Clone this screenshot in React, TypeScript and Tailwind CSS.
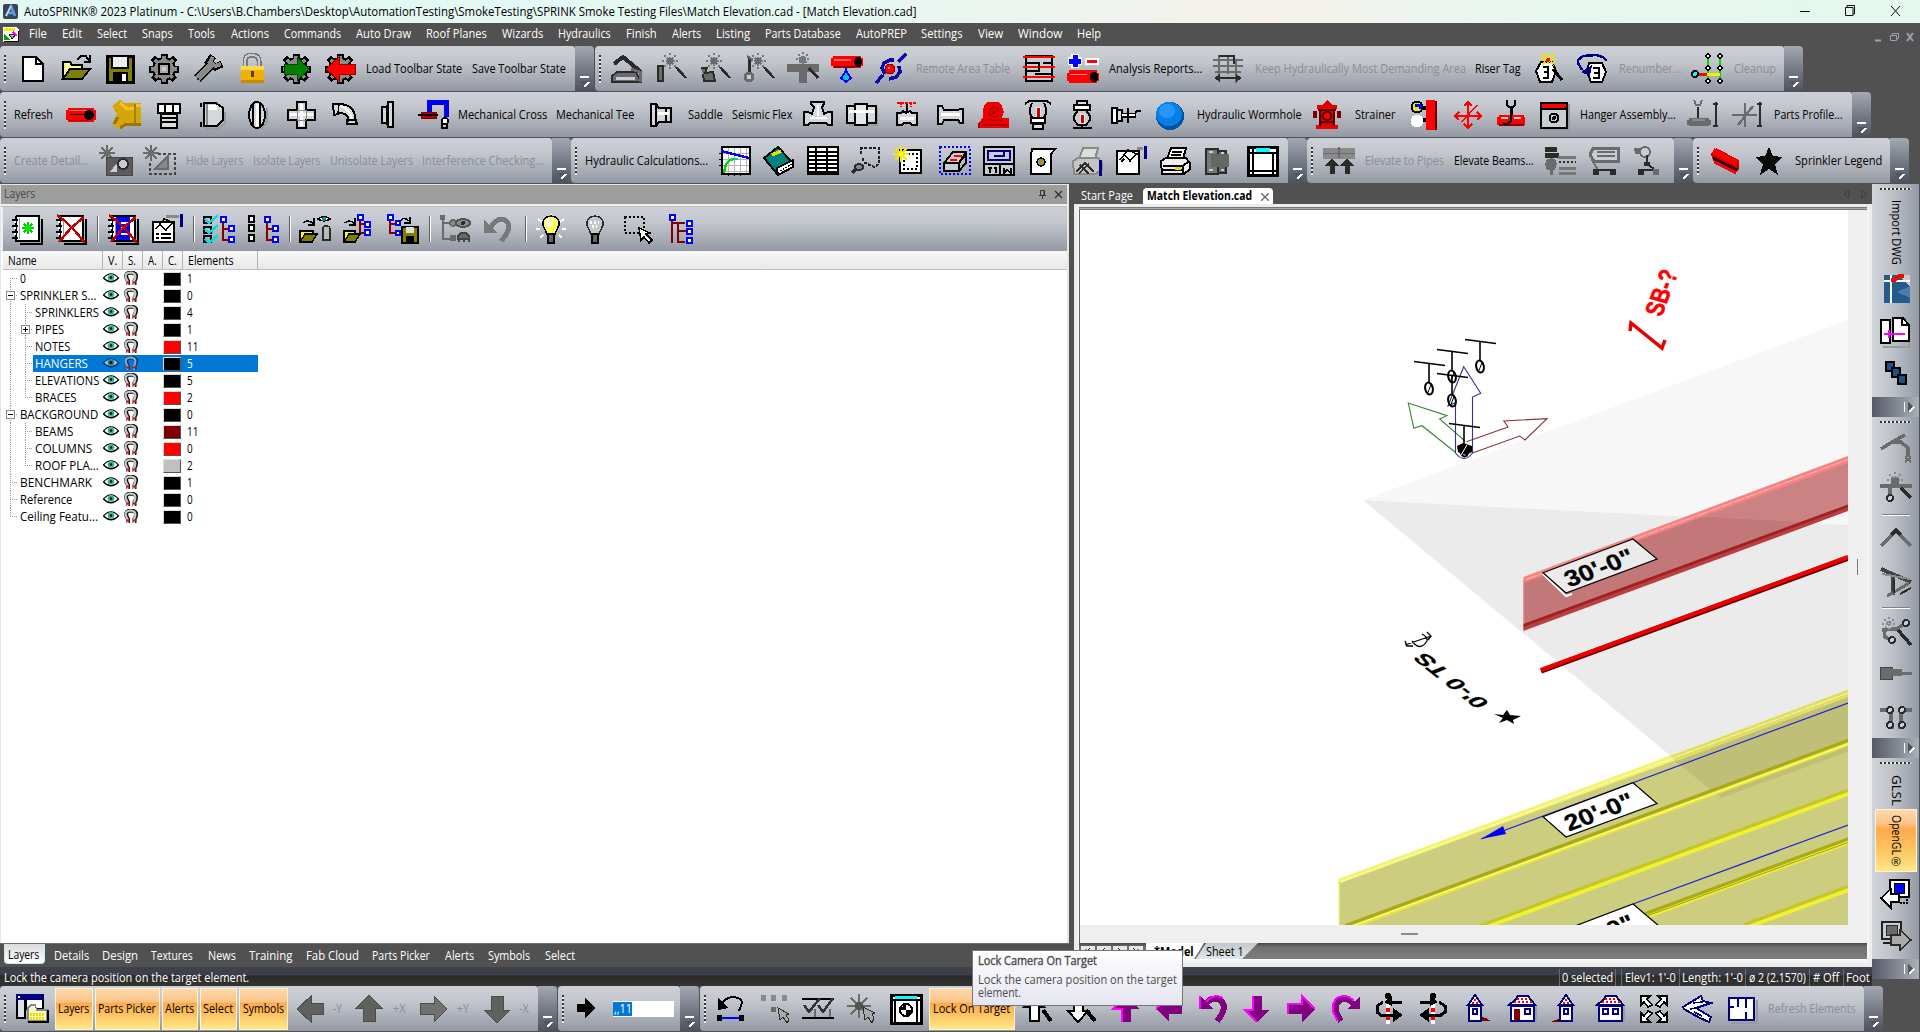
import { useLayoutEffect, useRef, type ReactNode } from "react";

/* ---------- text fitted to a given length ---------- */
function Fit({ w, children, className = "" }: { w: number; children: string; className?: string }) {
  const ref = useRef<HTMLSpanElement>(null);
  useLayoutEffect(() => {
    const el = ref.current;
    if (!el) return;
    const natural = el.offsetWidth;
    if (natural > 0) el.style.transform = `scaleX(${w / natural})`;
  }, [w, children]);
  return (
    <span className="block whitespace-nowrap" style={{ width: w }}>
      <span ref={ref} className={"inline-block origin-left whitespace-pre " + className}>{children}</span>
    </span>
  );
}
function VFit({ h, children }: { h: number; children: string }) {
  const ref = useRef<HTMLSpanElement>(null);
  useLayoutEffect(() => {
    const el = ref.current;
    if (!el) return;
    const natural = el.offsetHeight;
    if (natural > 0) el.style.transform = `scaleY(${h / natural})`;
  }, [h, children]);
  return (
    <div className="w-4" style={{ height: h }}>
      <span ref={ref} className="block h-max w-4 origin-top whitespace-pre text-[12px] leading-4 [writing-mode:vertical-rl]">{children}</span>
    </div>
  );
}

/* ---------- icon drawings, 32 x 30 grid: path, fill, stroke, width, dashes ---------- */
type Shape = [string, string, string?, number?, string?];
const k = "#000", w = "#fff", g = "#6b6b6b", r = "#f00", n = "#000080", d = "#2b2b2b", m = "#800000", y = "#ff0", b = "#00f", q = "#8a8a8a", L = "#c9ccd1";
const c = (x: number, v: number, a: number, e = a) => `M${x - a} ${v}a${a} ${e} 0 1 0 ${2 * a} 0a${a} ${e} 0 1 0 ${-2 * a} 0Z`;
const R = (x: number, v: number, a: number, e: number) => `M${x} ${v}h${a}v${e}h${-a}Z`;
const F = "none";
const gear: Shape[] = [
  ["M16 0V30M1 15H31M5 4L27 26M27 4L5 26", F, k, 7],
  [c(16, 15, 11), q, k, 2],
  ["M16 2V28M3 15H29M7 6L25 24M25 6L7 24", F, q, 4],
];
const spark = (x: number, v: number, s: number, col: string): Shape => [`M${x - s} ${v}H${x + s}M${x} ${v - s}V${v + s}M${x - s * 0.7} ${v - s * 0.7}L${x + s * 0.7} ${v + s * 0.7}M${x + s * 0.7} ${v - s * 0.7}L${x - s * 0.7} ${v + s * 0.7}`, F, col, 1.5];
const wand: Shape[] = [[spark(15, 7, 8, "#777")[0], F, "#777", 2, "2 1.5"], [R(12, 4, 6, 6), g], ["M21 13L31 24", F, d, 2.5]];
const notebook: Shape[] = [["M9 30H31V5", F, k, 2], ["M6 2H28V27H5V3Z", w, k, 2.5], ["M8 4V25", F, "#999", 1], ["M1 6H7M1 12H7M1 18H7M1 24H7", F, k, 2.5], ["M3 8H5M3 14H5M3 20H5", F, w, 2]];
const redX: Shape = ["M2 1L10 7L20 17L30 29M29 3L16 14L4 28", F, "#c00000", 2.5];
const tree: Shape[] = [["M20 6V26H27M20 15H27", F, m, 2], [R(18, 3, 5, 5), w, b, 2], [R(26, 12, 5, 5), w, b, 2], [R(26, 23, 5, 5), w, b, 2]];
const house = (wide: boolean): Shape[] => wide
  ? [["M29 28V13", F, "#9a9da2", 3], ["M9 6L12 2H22L29 11H3Z", "#fff", n, 2], ["M8 8H26M11 5H23", F, r, 2.5, "2 2"], [R(5, 12, 23, 15), w, n, 2], [R(19, 15, 5, 5), w, n, 2]]
  : [["M13 1L20 11H6Z", "#fff", n, 2], ["M10 9H17M12 6H15", F, r, 2.5, "2 2"], [R(7, 12, 12, 15), w, n, 2], [R(11, 15, 4, 5), w, n, 2]];

const ICONS: Record<string, Shape[]> = {
  page: [["M7 3H20L27 10V27H7Z", w, k, 2], ["M20 3V10H27", F, k, 2]],
  open: [["M17 6L21 2H26L29 7M30 1V8H24", F, k, 2], ["M3 25V8H10L12 11H22V16", "#ffff9a", k, 2], ["M3 25L10 15H30L22 25Z", "#808000", k, 2]],
  save: [["M3 2H29V28H3Z", "#808000", k, 3], [R(8, 2, 16, 12), "#eee", k, 2], [R(9, 18, 15, 10), k], [R(18, 20, 4, 7), w]],
  gear: [...gear, [R(11, 10, 10, 10), "#a8a8a8", k, 2], [R(14, 13, 4, 4), L]],
  wrench: [["M5 25L21 9", F, k, 9], ["M21 2L17 8L23 13L30 10", F, k, 7], ["M5 25L21 9", F, q, 6], ["M21 3L18 8L23 12L29 10", F, q, 4], [c(6, 25, 1.5), d]],
  lock: [["M9 13V7Q9 1 16 1Q23 1 23 7V13", F, "#777", 5], ["M9 13V7Q9 1 16 1Q23 1 23 7V13", F, "#ccc", 2], [R(5, 12, 23, 17), "#f2b100"], [R(5, 12, 23, 4), "#fcd94a"], [R(5, 26, 23, 3), "#c98a00"], ["M16 17V23", F, "#5a3c00", 3]],
  gearGo: [...gear, ["M4 10H17V3L29 15L17 27V20H4Z", "#008000", "#004000", 1]],
  gearBack: [...gear, ["M31 10H15V3L2 15L15 27V20H31Z", r, "#900", 1]],
  deskA: [["M3 10L12 3L30 18", F, d, 4], ["M1 28V22L6 18H25L30 28Z", g, d, 2], ["M5 24H24", F, L, 3], ["M20 15L29 18V28", F, g, 3]],
  wandA: [...wand, [R(3, 12, 5, 15), g, d, 2]],
  wandB: [...wand, ["M2 14H8L6 19L14 18L16 27H5L4 20", g, d, 2]],
  wandC: [...wand, ["M6 3V19", F, d, 3], [c(6, 23, 4), L, g, 3], ["M4 2L10 6", F, g, 2]],
  wandD: [[R(0, 10, 32, 8), g], [R(12, 10, 8, 19), g], [R(12, 3, 7, 6), "#777"], [spark(16, 5, 7, "#777")[0], F, "#777", 2, "2 1.5"], ["M22 14L31 24", F, d, 3]],
  pipeDrop: [[R(2, 2, 28, 12), r], [R(0, 4, 32, 8), r], ["M3 12.500H24", F, "#900", 2], ["M3 6H20", F, "#ff7070", 1.5], [c(27, 8, 4, 5), k], ["M15 14V20", F, b, 2], ["M15 17L20 24L15 28L10 24Z", "#0cc", b, 2]],
  orbit: [["M1 29L8 21M10 20L7 14L9 9L15 6H19M23 8L31 0M24 12L25 18L21 23L14 25", F, "#0a0aa8", 3.5], [c(15, 15, 5), r, m, 1], [c(14, 14, 1.5), "#f99"]],
  sheetRed: [[R(3, 2, 26, 25), L, k, 2], ["M0 3H32M0 13H32M0 23H32", F, r, 2], ["M4 9H16V17H4M29 9H20M12 20H29", F, k, 2]],
  plusPipe: [["M8 0V14M1 7H15", F, w, 8], ["M8 1V13M2 7H14", F, b, 5], [R(19, 5, 12, 5), r, w, 2], [R(2, 16, 28, 13), r], [R(0, 19, 32, 8), r], [c(27, 23, 4.5, 5.5), k], ["M3 20H20", F, "#ff9090", 1]],
  grate: [["M1 6H31M1 12H31M3 18H29M3 24H29", F, g, 2], ["M7 1V24M24 7V29M16 3V20", F, g, 2.5], ["M7 2H22V10", F, d, 2], ["M3 24H29", F, d, 2], ["M2 24L8 20V28ZM30 24L24 20V28Z", d]],
  tag3: [["M9 8H20L24 17L20 28H8L4 17Z", w, k, 2], ["M11 13H16V24H11M12 18H16", F, k, 2.5], ["M21 15L30 26", F, k, 3], ["M16 -1V12M8 5H24M10 0L22 11M22 0L10 11", F, "#f4e400", 2, "3 1"], [c(16, 6, 2), r]],
  tag3b: [["M13 9H26L30 18L26 28H15L11 18Z", w, k, 2], ["M17 14H23V24H17M18 19H22", F, k, 2.5], ["M2 11V6L7 2L20 1L27 3L31 7M2 9L6 16", F, n, 2.5], ["M5 18L16 11L14 22Z", n]],
  nodes: [["M16 4V26M28 4V26", F, "#0d0", 2.5], ["M4 20H15", F, r, 3], ["M15 20H28", F, "#f0f000", 3], [c(3, 20, 3), "#0ff", k, 2], [c(16, 2, 2), w, k, 1.5], [c(28, 2, 2), w, k, 1.5], [c(16, 14, 2), w, k, 1.5], [c(28, 14, 2), w, k, 1.5], [c(16, 27, 2), w, k, 1.5], [c(28, 27, 2), w, k, 1.5]],

  pipe: [[R(2, 8, 26, 14), r], [R(0, 10, 30, 10), r], ["M4 14.500H20", F, k, 1.5], ["M3 20.500H22", F, "#a00000", 1.5], ["M3 10.500H22", F, "#ff6a6a", 1.5], [c(23, 15, 5, 5), k]],
  fittingY: [["M31 3H15L10 0L2 6L7 14L2 24L9 29L16 25H31Z", "#d4a60e"], ["M31 5H25M24 8H16L10 3", F, "#f0c428", 3], ["M25 4V25", F, "#a88000", 1.5], ["M31 24H16L10 28M8 17L4 24", F, "#9c7600", 3]],
  bolt: [[R(4, 4, 22, 9), w, k, 2.5], ["M11 4V13M19 4V13", F, k, 2], [R(7, 14, 16, 14), "#ddd", k, 2.5], ["M7 18H23M7 22H23", F, k, 2]],
  cap: [["M27 12V23L21 29H8", F, "#989ba0", 2], ["M6 3H18L25 8V20L19 26H6Z", "#d5d7da", k, 2], [R(10, 5, 9, 5), w], ["M9 4V25", F, q, 1.5], ["M3 3V7M3 22V27", F, k, 2]],
  disc: [["M25 8V22L19 29", F, "#989ba0", 2], [c(15, 15, 8, 13), "#d5d7da", k, 2], ["M11 4V26M18 3V27", F, k, 1.5], ["M15 4V26", F, w, 3]],
  cross: [["M11 2H20V10H29V20H20V28H11V20H2V10H11Z", "#d5d7da", k, 2], ["M15 4V26M4 14H27", F, w, 3], ["M11 10V20M20 10V20M11 10H20M11 20H20", F, q, 1]],
  elbow: [["M3 4H11Q25 6 25 18L27 24H17L18 19Q18 14 11 13L4 15Z", "#d5d7da", k, 2], ["M8 6Q20 7 22 20", F, w, 2], ["M9 4L8 13M16 20H25", F, k, 1.5]],
  plate: [[R(14, 2, 5, 25), "#d5d7da", k, 2], [R(8, 7, 5, 16), "#d5d7da", k, 2], ["M13 5V25", F, k, 2]],
  riserNip: [["M11 15V2H28V17", F, "#001090", 5], ["M11 15V2H28V17", F, b, 3.5], [R(3, 12, 15, 6), "#b00000", m, 1], ["M0 15H20", F, k, 1.5], [c(27, 21, 3), w, k, 1.5], [R(24, 24, 5, 4), L, k, 2]],
  reducer: [["M7 4H12L15 8H27V22H15L12 26H7Z", "#d5d7da", k, 2], ["M12 4V26M22 8V22", F, k, 1.5], ["M14 13H25", F, w, 3]],
  tee: [["M2 25V12H6L10 14L12 7L9 4V2H22V4L20 7L22 14L26 12H30V25H26L24 23H8L6 25Z", "#d5d7da", k, 2], ["M8 18H25M16 5V16", F, w, 2.5]],
  coupling: [["M3 25H31V8", F, "#989ba0", 2], [R(1, 6, 29, 17), "#d5d7da", k, 2], [R(9, 4, 12, 21), "#e5e6e8", k, 2], ["M3 11H28", F, w, 3]],
  drain: [["M7 3H26M11 2V7M21 2V7", F, r, 2, "3 1"], ["M16.500 4V12", F, k, 2], ["M7 13H11L13 11L16 13L20 11L22 13H27V25H22L20 23H14L12 25H7Z", "#d5d7da", k, 2], ["M10 18H24", F, w, 3]],
  nipple: [["M4 6H8L10 10H24L26 9H29V23H26L24 20H10L8 24H4Z", "#d5d7da", k, 2], ["M7 14H26", F, w, 3]],
  pump: [["M9 2H20L24 6L26 12L24 18H31V28H1V23L5 17Q4 6 9 2Z", "#ee0000"], [c(16, 12, 5), F, "#b00000", 1.5], [c(16, 12, 2), "#b80000"], ["M4 25H29M7 20H25M1 28V23", F, "#b00000", 1.5]],
  pendentU: [["M3 4L7 1H25L29 4", F, k, 2], ["M10 3L8 8V14L12 20H20L24 14V8L22 3", "#c9cbce", k, 2], [R(14, 7, 4, 10), "#d00000", "#eee", 1], [R(9, 18, 14, 5), w, k, 2], [R(11, 24, 10, 5), "#ddd", k, 2]],
  pendentD: [["M7 28H26M16 24V28", F, k, 2.5], ["M12 10L8 16V20L12 25H20L24 20V16L20 10", "#c9cbce", k, 2], [R(14, 14, 4, 9), "#d00000", "#eee", 1], [R(8, 5, 16, 5), w, k, 2], [R(11, 1, 10, 4), "#ddd", k, 2]],
  sidewall: [[R(2, 8, 5, 15), w, k, 2], [R(7, 10, 5, 11), "#ddd", k, 2], ["M12 15H26", F, k, 5], ["M12 15H25", F, w, 2], ["M18 8V23M25 13L27 11H31", F, k, 2]],
  ball: [[c(16, 16, 14, 14), "#0054a8"], [c(15, 14, 13, 12), "#0a7ee4"], [c(13, 11, 8, 7), "#2496fc"]],
  hydrant: [["M9 7L16 0L23 7V27H9Z", "#d80000"], ["M6 7H26M5 27H27", F, "#e80000", 4], ["M4 11V18M28 11V18", F, "#700", 4], [c(16, 16, 4), r, "#500", 2], ["M9 9V26M23 9V26M10 22H22M7 10H25", F, "#500", 1.5]],
  bell: [["M14 8H20M14 20H20", F, k, 4], [R(18, 0, 9, 30), r], ["M28 1V30", F, "#600", 2], [c(9, 7, 5.5), "#f0e800", k, 2], ["M7 5H12V9", F, b, 3], [c(9, 21, 6.5), w]],
  seismic: [["M16 3V27M3 16H29M10 22L25 5", F, r, 1.5], ["M12 6L16 2L20 6M25 12L29 16L25 20M7 12L3 16L7 20M12 24L16 28L20 24", F, r, 1.5]],
  hangerRed: [["M15 7V17", F, k, 3], ["M11 0V5L13 7H17L19 5V0", F, k, 2], [R(3, 15, 25, 11), r], [R(1, 17, 28, 8), r], ["M3 25H28", F, "#800", 2], ["M15 15V21L11 24H7", F, k, 2.5], ["M5 18H12M18 18H25", F, "#fcc", 2]],
  panel: [["M31 4V30H5", F, "#989ba0", 2], [R(3, 3, 26, 25), L, k, 2.5], [R(4, 4, 24, 5), r], ["M3 9H29", F, k, 2], [c(16, 18, 4.5), F, k, 2], [c(16, 18, 2), k]],
  hangGrayA: [["M11 7V18", F, d, 2], ["M7 0L9 5H13L15 0", F, g, 2], [R(2, 18, 20, 8), g], [R(0, 20, 24, 5), g], ["M5 20H18", F, q, 2], ["M29 2V27M26 4H31M26 26H31", F, d, 2]],
  hangGrayB: [["M14 3V27M1 15H26M7 25L22 6", F, g, 2.5], ["M29 2V27M26 4H31M26 26H31", F, d, 2]],

  cube: [spark(7, 7, 8, g), ["M6 11H32V29H6Z", "#5c5c5c", "#444", 1], [c(23, 18, 5), L, d, 2], ["M10 26L17 17V26Z", L]],
  cubeSel: [spark(7, 7, 8, g), ["M14 8H31V28H6V16", F, "#444", 2.5, "3 2"], ["M11 23L24 10V23Z", q, g, 2]],
  graph: [[R(3, 1, 28, 27), "#ddd", k, 2], [R(4, 2, 26, 25), w], ["M9 2V27M15 2V27M21 2V27M27 2V27M4 7H30M4 13H30M4 19H30M4 25H30", F, "#b5b5b5", 1], ["M2 5L30 12", F, b, 2.5], ["M5 27L7 18L11 14L15 13", F, "#0d0", 2.5], ["M15 13H19", F, "#0cc", 2.5], ["M0 7H3M0 13H3M0 19H3M9 30V27M15 30V27M21 30V27", F, k, 1]],
  book: [["M1 12L15 1L29 16L15 29Z", "#008080", k, 2], ["M15 29L14 22L30 14V21Z", w, k, 2], ["M17 25L29 18", F, k, 1, "2 1"], ["M9 9L18 5", F, "#e8e000", 3.5]],
  grid: [[R(1, 1, 30, 27), w, k, 2], ["M1 6H31M1 10H31M1 14H31M1 18H31M1 22H31M1 26H31M9 1V28M20 1V28", F, k, 1.5]],
  loupe: [["M10 8V2H28V18L23 21L12 16V11", F, "#222", 2, "3 1.5"], [c(8, 21, 4, 3), "#888", d, 2], ["M1 27L5 23", F, d, 3]],
  newSel: [[R(5, 4, 21, 23), w, k, 2], ["M9 8H22V23H9Z", F, k, 1.5, "2 2"], [spark(6, 8, 8, y)[0], F, "#f4e800", 2], [c(6, 8, 2), y]],
  stamp: [["M1 1H31V28H1Z", F, b, 2, "2 2"], ["M5 17L14 6H27L20 17V25H5Z", L, k, 2], ["M5 17H20L27 8V17L20 25", F, k, 2], ["M11 14H18M15 10H23", F, r, 2.5]],
  calc: [[R(1, 1, 30, 28), L, k, 2], [R(5, 5, 22, 9), L, n, 2.5], ["M11 10H21V6", F, n, 1.5], ["M1 18H31M17 18V29M5 22H9M11 22H14M7 22V27M13 22V27M21 22V27L24 24L28 27V22", F, k, 1.5]],
  scroll: [["M5 3H28L24 8V28H4V9Z", w, k, 2], [c(14, 16, 4), "#0cc", k, 1.5], ["M14 13V19M11 16H17", F, "#d88000", 1.5]],
  printSetup: [["M8 13L12 2H27L24 13Z", "#ddd", q, 2], ["M2 15L7 12H27L31 17V23L25 28H3Z", "#c4c4c4", q, 2], ["M5 26L14 17L23 26M9 19L18 28M18 18L8 27", F, d, 1.5], ["M29 14V30", F, n, 3]],
  pageSetup: [[R(2, 5, 22, 23), w, k, 2], ["M5 14L13 4L24 9M9 8L15 15L21 8M6 16L9 13", F, k, 1.5], ["M22 2H28", F, q, 3], ["M30 0V13", F, n, 3]],
  printer: [["M8 13L12 2H27L24 13Z", w, k, 2], ["M13 6H23M12 9H22", F, k, 1.5], ["M2 15L7 12H27L31 17V23L25 28H3Z", "#eee", k, 2], ["M4 20H24L30 15M4 24H24M24 20V27", F, k, 2], [R(16, 21, 6, 3), "#e8d800"]],
  blockGray: [[R(3, 3, 12, 25), "#777", d, 1.5], [R(15, 5, 8, 22), "#666", d, 1.5], [R(8, 8, 18, 13), "#666"], ["M6 6H10M6 24H10M18 7H21M18 24H21", F, L, 2]],
  window: [[R(1, 1, 29, 28), w, k, 3], ["M2 7H30M2 25H30M6 1V29M26 7V29", F, k, 1.5], [R(9, 2, 14, 4), "#0ff"]],
  elevPipe: [["M0 4H32M0 10H32", F, "#8a8a8a", 5], ["M16 1V12", F, g, 2], ["M0 7H32", F, g, 1], ["M9 28V18M24 28V18", F, d, 5], ["M2 20L9 12L16 20ZM17 20L24 12L31 20Z", d]],
  beamA: [["M1 3H13M1 9H15", F, d, 5], ["M3 13H11L13 18L11 24H3L1 18Z", g], ["M7 12V29", F, g, 3], ["M14 11H32M15 22H32M15 27H32", F, "#777", 3], ["M15 16H32", F, d, 1.5, "2 2"]],
  beamB: [["M5 2H30V15H6L2 9Z", L, g, 3], ["M9 6H27M9 10H27", F, g, 1.5], ["M4 14L10 24", F, g, 2], [R(5, 23, 6, 6), d], [R(22, 23, 6, 6), d], ["M11 24H22", F, d, 2]],
  beamC: [["M2 2H17V8H3Z", g], [c(13, 6, 5), L, g, 2], ["M15 9V18L22 23", F, d, 2], [R(6, 23, 6, 6), d], [R(21, 23, 6, 6), g], [R(12, 16, 6, 4), d], ["M12 24H21", F, d, 2]],
  beamRed: [["M1 8L6 2L29 14V24L26 26L3 15Z", "#d00000"], ["M3 5L27 17", F, r, 6], ["M3 12L27 24", F, "#200", 2.5], ["M4 16L26 27", F, r, 3]],
  star: [["M15 1L19 10L29 11L21 18L24 29L15 23L6 29L9 18L1 11L11 10Z", "#0a0a0a"]],

  lyNew: [...notebook, spark(17, 14, 6, "#00c800"), [c(17, 14, 3), "#0e0"]],
  lyDel: [...notebook, redX],
  lyRen: [...notebook, [R(9, 3, 14, 23), b], ["M14 9H23M14 14H19M14 20H23", F, w, 2], redX],
  lyProp: [[R(2, 8, 21, 20), w, k, 2], ["M5 20H8M10 20H20M5 24H8M10 24H20", F, k, 1.5], ["M5 15L13 5L24 9M8 10L15 16L21 9", F, k, 1.5], ["M15 2H28", F, q, 3], ["M30 0V13", F, n, 3]],
  lyTree: [...tree, [R(1, 3, 7, 6), F, k, 1.5], [R(1, 13, 7, 6), F, k, 1.5], [R(1, 22, 7, 6), F, k, 1.5], ["M2 5L6 9L15 1M2 15L6 19L15 11M2 25L6 29L15 21", F, "#00e0e8", 2.5]],
  lyTree2: [...tree, [R(2, 2, 5, 6), w, k, 2], [R(2, 11, 5, 6), w, k, 2], [R(2, 21, 5, 6), w, k, 2]],
  lyLoadA: [["M5 9Q7 5 14 9M15 4V11H9", F, k, 1.5], ["M1 28V17H14V20", y, k, 2], ["M1 28L6 20H18L13 28Z", "#808000", k, 1.5], ["M19 5Q25 0 31 5Q25 9 19 5Z", w, k, 1.5], [c(25, 5, 2), "#099"], ["M24 26V15Q24 12 27 12Q31 12 31 15V26Z", "#bbb", d, 1.5]],
  lyLoadB: [["M17 5V19H24M17 10H24", F, m, 2], [R(15, 1, 5, 5), w, b, 2], [R(22, 8, 5, 5), w, b, 2], [R(22, 16, 5, 5), w, b, 2], ["M2 9Q5 5 11 9M12 4V11H6", F, k, 1.5], ["M1 28V17H12V20", y, k, 2], ["M1 28L6 20H17L12 28Z", "#808000", k, 1.5]],
  lySave: [["M3 3V19H10M3 10H10", F, m, 2], [R(1, 1, 5, 5), w, b, 2], [R(9, 7, 4, 4), w, b, 2], [R(9, 17, 4, 4), w, b, 2], ["M13 7Q17 2 22 7M23 3V9H17", F, k, 1.5], [R(15, 13, 16, 16), "#808000", k, 2], [R(19, 13, 8, 6), "#ddd"], [R(19, 22, 8, 7), k]],
  lyEyeTree: [["M4 2V25H12M4 9H12", F, g, 2.5], [R(1, 1, 5, 5), g], [R(11, 21, 6, 6), g], [c(14, 9, 3), q, g, 2], [c(24, 9, 7, 4), q, "#555", 2], [c(24, 9, 2), d], ["M19 25V22L22 19H27L30 22V25ZM19 27H21M24 27H26M29 27H31", g, "#444", 2]],
  undoG: [["M8 13Q14 3 22 6Q31 13 18 27", F, "#77797c", 5], ["M1 6V19H14Z", "#77797c"]],
  bulbOn: [["M16 0V3M3 5L7 8M1 15H5M29 5L25 8M31 15H27M5 24L8 21M27 24L24 21", F, w, 2], ["M16 2Q25 3 24 11L20 20H12L8 11Q7 3 16 2Z", "#ffff60", k, 1.5], [c(14, 9, 4), "#ffffd0"], [R(13, 20, 6, 9), "#666", k, 1.5]],
  bulbOff: [["M16 2Q25 3 24 11L20 20H12L8 11Q7 3 16 2Z", "#c5c7ca", d, 1.5], ["M11 8H20M13 12H18", F, w, 3, "2 2"], [R(13, 20, 6, 9), "#666", k, 1.5]],
  marquee: [["M3 3H22V19H3Z", F, k, 1.5, "2 2"], ["M17 14L19 26L22 23L27 29L30 26L24 20L28 19Z", w, k, 1.5]],
  treeRed: [["M3 4V29M9 9V28H16M3 9H16M9 17H22", F, m, 2.5], [R(1, 1, 5, 5), w, b, 2], [R(18, 7, 5, 5), w, b, 2], [R(18, 15, 5, 5), w, b, 2], [R(18, 24, 5, 5), w, b, 2]],

  winFolder: [[R(1, 4, 8, 20), "#dfe1e4", k, 2], [R(10, 4, 17, 11), w, k, 2], [R(0, 0, 28, 6), n], [R(2, 2, 2, 2), w], ["M12 27V14L15 11H19L21 16H31V27Z", "#f8f8c0", q, 1.5], ["M14 20H29M14 24H29", F, "#e8e000", 3, "2 1"], ["M12 28H32V16", F, k, 2]],
  aLeft: [["M1 15L15 2V9H27V20H15V28Z", "#606060", "#4c4c4c", 1]],
  aUp: [["M15 1L28 14H21V27H9V14H2Z", "#606060", "#4c4c4c", 1]],
  aRight: [["M29 15L16 2V9H2V20H16V28Z", "#707070", "#4c4c4c", 1]],
  aDown: [["M15 29L28 16H21V2H9V16H2Z", "#606060", "#4c4c4c", 1]],
  blackArrow: [["M7 10H15V4L25 14L15 24V18H7Z", k]],
  undoLine: [["M6 11Q12 3 20 3Q28 4 28 9L25 17", F, k, 2], ["M4 4V16L14 14Z", k], ["M5 24H28", F, b, 2.5], [R(3, 21, 5, 6), k], [R(25, 21, 5, 6), k]],
  dotsSel: [[R(3, 1, 5, 6), q], [R(13, 1, 5, 6), q], [R(24, 1, 5, 6), q], [R(13, 13, 5, 5), g], ["M20 14L22 26L25 23L29 29L31 26L28 21L31 20Z", "#aaa", d, 1]],
  checks: [["M0 5H32M0 24H32", F, k, 2.5], ["M2 11L7 18L18 4M16 11L21 18L31 4", F, "#333", 2.5], ["M13 23V15M28 23V15", F, g, 2.5]],
  burst: [spark(13, 12, 12, g), [c(13, 12, 4), "#555"], ["M17 13L19 26L22 23L26 29L28 24L26 20L29 19Z", "#aaa", d, 1]],
  target: [[R(1, 1, 30, 28), w, k, 3], [R(5, 2, 22, 3), "#0ff"], ["M1 6H31M5 6V29M27 6V29", F, k, 1.5], [c(16, 16, 6), w, k, 2], ["M16 11V16H11A6 6 0 0 1 16 11ZM16 22V16H22A6 6 0 0 1 16 22Z", k]],
  zoomIn: [["M12 2L22 13H17V27H8V13H2Z", w, k, 2], ["M21 16L29 27", F, k, 4]],
  zoomOut: [["M12 28L22 17H17V3H8V17H2Z", w, k, 2], ["M20 16L29 27", F, k, 4]],
  pUp: [["M16 2L29 15H21V28H12V15H3Z", "#800080"], ["M12 28V15H3L16 2", F, "#f0f", 2]],
  pLeft: [["M2 15L15 3V10H28V20H15V28Z", "#800080"], ["M2 15L15 3V10H28", F, "#f0f", 2]],
  pUndo: [["M7 11Q13 2 22 6Q31 13 19 27", F, "#800080", 6], ["M2 2V15H15Z", "#800080"], ["M2 2V15M8 8Q16 -1 25 4", F, "#f0f", 2]],
  pDown: [["M15 28L28 16H20V2H11V16H3Z", "#800080"], ["M11 2V16H3L15 28", F, "#f0f", 2]],
  pRight: [["M29 15L16 2V10H2V20H16V28Z", "#800080"], ["M2 20V10H16V2L29 15", F, "#f0f", 2]],
  pRedo: [["M24 11Q18 2 10 6Q1 13 11 27", F, "#800080", 6], ["M30 2V15H17Z", "#800080"], ["M24 7Q16 -1 7 4Q-2 13 8 27", F, "#f0f", 2]],
  rotL: [["M14 2V30", F, w, 4], ["M14 6V30", F, r, 4, "4 4"], [c(14, 2, 3), k], ["M28 8H14M9 8L3 12V18L7 21H20", F, k, 3], ["M19 14L29 21L19 28Z", k], ["M18 2L10 8L18 12Z", k]],
  rotR: [["M15 2V30", F, w, 4], ["M15 6V30", F, r, 4, "4 4"], [c(15, 2, 3), k], ["M2 8H16M21 8L27 12V18L23 21H10", F, k, 3], ["M11 14L1 21L11 28Z", k], ["M12 2L20 8L12 12Z", k]],
  houseA: [...house(false), ["M20 23V27H29L24 24Z", m]],
  houseB: [...house(true), [R(8, 15, 6, 11), m]],
  houseC: [["M1 28H10V24Z", m], ["M16 1L23 11H9Z", "#fff", n, 2], ["M13 9H20M15 6H18", F, r, 2.5, "2 2"], [R(10, 12, 12, 15), w, n, 2], [R(14, 15, 4, 5), w, n, 2]],
  houseD: [...house(true), [R(9, 15, 5, 5), w, n, 2]],
  expand: [["M3 2H12L9 5L14 11L10 13L6 8L3 11ZM29 2H20L23 5L18 11L22 13L26 8L29 11ZM3 28H12L9 25L14 19L10 17L6 22L3 19ZM29 28H20L23 25L18 19L22 17L26 22L29 19Z", w, k, 1.5]],
  plane: [["M1 13L19 2L21 7L29 9L14 14L29 23L27 28L18 24L2 15Z", w, n, 2], ["M11 9L21 8M8 15L14 14M12 18L20 22", F, n, 1.5]],
  plan: [["M31 6V29H5", F, "#989ba0", 2], [R(3, 4, 25, 22), w, n, 2.5], ["M12 4V13M20 4V14M20 18V26M3 13H8", F, n, 2]],

  dwg: [[R(4, 1, 26, 28), "#245a8c"], ["M20 3L30 12V1H20Z", L], ["M11 1V29M4 7H30", F, w, 1.5], ["M11 6H15L19 2H24", F, r, 3.5], ["M17 18L30 12V24", "#4a7cae"]],
  overlay: [["M3 30H29V10", F, "#989ba0", 2], ["M1 3H10V26H1Z", w, k, 2], ["M13 1H23L29 8V24H13Z", w, k, 2], ["M22 1V8H29", F, k, 2], ["M4 17H25", F, "#f0f", 2], ["M9 13V21", F, "#f0f", 2]],
  chain: [[R(6, 3, 8, 9), "#1d5288", k, 2], [R(12, 9, 8, 9), "#1d5288", k, 2], [R(18, 16, 8, 9), "#1d5288", k, 2]],
  swing: [["M1 16L12 9L25 2M13 9H21L28 15V24", F, g, 3.5], ["M25 24L31 29M31 24L25 29", F, g, 2]],
  sprWand: [[spark(15, 6, 8, q)[0], F, q, 2, "2 1.5"], [R(11, 4, 8, 7), g], ["M0 12H32M10 12V22", F, g, 3.5], [c(10, 24, 3), L, d, 2], ["M21 14L31 24", F, d, 3]],
  peak: [["M1 23L16 8L31 23", F, g, 3.5], ["M11 12L16 7L21 12", F, d, 3.5]],
  vise: [["M1 2L31 15M13 8V28", F, "#444", 4], ["M2 7L30 12", F, q, 2], ["M7 29L16 24L29 16", F, g, 3], ["M14 12V26M20 27L31 21", F, d, 2]],
  nodeWand: [["M25 7L16 12L4 13L5 20L12 23", F, g, 3.5], [c(26, 6, 3), L, d, 2], [c(12, 23, 3), L, d, 2], ["M18 13L31 28", F, d, 3.5], [spark(9, 7, 7, q)[0], F, q, 2, "2 1.5"]],
  tip: [[R(0, 9, 12, 12), g, "#444", 1], [R(12, 11, 10, 7), g], ["M22 15H32", F, g, 3]],
  joints: [["M0 7H8M24 7H32M11 9V20M21 9V20M10 24H14M18 24H22", F, g, 3.5], [c(10, 7, 3), L, d, 2], [c(22, 7, 3), L, d, 2], [c(10, 22, 3), L, d, 2], [c(22, 22, 3), L, d, 2]],
  backView: [[R(10, 1, 19, 17), w, k, 2.5], [R(14, 4, 10, 10), b, k, 1], ["M20 24H29M27 20V26", F, k, 2, "2 1"], ["M1 19L11 10V15H19V23H11V29Z", w, k, 1.5]],
  fwdView: [[R(2, 1, 19, 17), L, "#222", 2.5], [R(6, 4, 11, 10), g, d, 1], ["M3 22H12", F, "#222", 2], ["M31 19L20 9V14H11V24H20V29Z", "#aaa", d, 1.5]],
};

function Icon({ name }: { name: string }) {
  return (
    <svg className="block h-[30px] w-8 overflow-visible" viewBox="0 0 32 30" shapeRendering="crispEdges">
      {ICONS[name].map((s, i) => <path key={i} d={s[0]} fill={s[1]} stroke={s[2] ?? "none"} strokeWidth={s[2] ? s[3] ?? 2 : 0} strokeDasharray={s[4]} />)}
    </svg>
  );
}

/* ---------- flow of items with known starts and lengths ---------- */
type Item = { x: number; w: number; node: ReactNode };
function Flow({ from, items, vertical = false, className = "" }: { from: number; items: Item[]; vertical?: boolean; className?: string }) {
  let pos = from;
  return (
    <div className={(vertical ? "flex flex-col items-center " : "flex items-center ") + className}>
      {items.map((it, i) => {
        const gap = it.x - pos;
        pos = it.x + it.w;
        return <div key={i} className="shrink-0" style={vertical ? { marginTop: gap, height: it.w } : { marginLeft: gap, width: it.w }}>{it.node}</div>;
      })}
    </div>
  );
}
const ic = (x: number, name: string): Item => ({ x, w: 32, node: <Icon name={name} /> });
const tx = (x: number, end: number, s: string, cls = "text-black"): Item => ({ x, w: end - x, node: <Fit w={end - x} className={cls}>{s}</Fit> });
const dim = (x: number, end: number, s: string) => tx(x, end, s, "text-[#8b8e93]");
const hot = (x: number, end: number, s: string, a: number, e: number): Item => ({
  x, w: end - x,
  node: (
    <div className="flex h-[42px] items-center border border-[#fff3d0] bg-[linear-gradient(#fcd9ae_0%,#fdc487_32%,#fdaa4c_36%,#fdc765_68%,#fee88a_100%)]">
      <div className="shrink-0" style={{ marginLeft: a - x - 1 }}><Fit w={e - a}>{s}</Fit></div>
    </div>
  ),
});
const sep = (x: number): Item => ({ x, w: 2, node: <div className="h-[26px] w-[2px] border-l border-[#5c626c] bg-white" /> });

function Chevron() {
  return (
    <div className="flex w-[19px] shrink-0 flex-col items-center justify-end rounded-tr bg-[linear-gradient(#a3a8b2,#7b818c_45%,#4c535f)] pb-[3px]">
      <svg className="h-3 w-[11px]" viewBox="0 0 11 12" shapeRendering="crispEdges">
        <path d="M1 1H10" stroke="#fff" strokeWidth="1.500" />
        <path d="M1 5H10L5.500 10Z" fill="#555" /><path d="M10 6L5.500 11" stroke="#fff" strokeWidth="2" />
      </svg>
    </div>
  );
}
function Bar({ x, end, items }: { x: number; end: number; items: Item[] }) {
  return (
    <div className="flex h-[45px] shrink-0">
      <div className="flex items-center overflow-hidden rounded-l rounded-tr-[3px] bg-[linear-gradient(#cdd0d6,#c3c6cc_35%,#9399a4)]" style={{ width: end - x }}>
        <div className="ml-[4px] h-[28px] w-[2px] shrink-0 bg-[repeating-linear-gradient(#333_0_2px,#e8e8e8_2px_4px)]" />
        <Flow from={x + 6} items={items} />
      </div>
      <Chevron />
    </div>
  );
}

const icons = (x: number, names: string) => names.split(" ").map((s, i) => ic(x + 44 * i, s));

const row1a = [...icons(16, "page open save gear wrench lock gearGo gearBack"), tx(366, 462, "Load Toolbar State"), tx(472, 566, "Save Toolbar State")];
const row1b = [...icons(611, "deskA wandA wandB wandC wandD pipeDrop orbit"), dim(916, 1010, "Remote Area Table"), ...icons(1023, "sheetRed plusPipe"), tx(1109, 1202, "Analysis Reports..."), ic(1212, "grate"), dim(1255, 1466, "Keep Hydraulically Most Demanding Area"), tx(1475, 1521, "Riser Tag"), ...icons(1532, "tag3 tag3b"), dim(1619, 1681, "Renumber..."), ic(1692, "nodes"), dim(1734, 1776, "Cleanup")];
const row2 = [tx(14, 53, "Refresh"), ...icons(66, "pipe fittingY bolt cap disc cross elbow plate riserNip"), tx(458, 547, "Mechanical Cross"), tx(556, 634, "Mechanical Tee"), ic(644, "reducer"), tx(688, 723, "Saddle"), tx(732, 792, "Seismic Flex"), ...icons(802, "tee coupling drain nipple pump pendentU pendentD sidewall ball"), tx(1197, 1302, "Hydraulic Wormhole"), ic(1311, "hydrant"), tx(1355, 1395, "Strainer"), ...icons(1408, "bell seismic"), ic(1496, "hangerRed"), ic(1538, "panel"), tx(1580, 1676, "Hanger Assembly..."), ...icons(1687, "hangGrayA hangGrayB"), tx(1774, 1843, "Parts Profile...")];
const row3a = [dim(14, 89, "Create Detail..."), ...icons(100, "cube cubeSel"), dim(186, 243, "Hide Layers"), dim(253, 320, "Isolate Layers"), dim(330, 413, "Unisolate Layers"), dim(422, 544, "Interference Checking...")];
const row3b = [tx(585, 708, "Hydraulic Calculations..."), ...icons(719, "graph book grid loupe newSel stamp calc scroll printSetup pageSetup printer blockGray window")];
const row3c = [ic(1323, "elevPipe"), dim(1365, 1444, "Elevate to Pipes"), tx(1454, 1534, "Elevate Beams..."), ...icons(1544, "beamA beamB beamC")];
const row3d = [...icons(1710, "beamRed star"), tx(1795, 1882, "Sprinkler Legend")];
const layerBar = [...icons(11, "lyNew lyDel"), sep(97), ...icons(107, "lyRen lyProp"), sep(193), ...icons(203, "lyTree lyTree2"), sep(289), ...icons(299, "lyLoadA lyLoadB lySave"), sep(429), ...icons(439, "lyEyeTree undoG"), sep(525), ...icons(535, "bulbOn bulbOff"), ic(622, "marquee"), ic(669, "treeRed")];

const menu: [number, number, string][] = [[29, 47, "File"], [62, 82, "Edit"], [97, 127, "Select"], [142, 173, "Snaps"], [188, 215, "Tools"], [231, 269, "Actions"], [284, 341, "Commands"], [356, 411, "Auto Draw"], [426, 487, "Roof Planes"], [502, 543, "Wizards"], [558, 611, "Hydraulics"], [626, 657, "Finish"], [672, 701, "Alerts"], [716, 750, "Listing"], [765, 841, "Parts Database"], [856, 907, "AutoPREP"], [921, 963, "Settings"], [978, 1003, "View"], [1018, 1062, "Window"], [1077, 1101, "Help"]];
const tabs: [number, number, string][] = [[54, 89, "Details"], [102, 138, "Design"], [151, 193, "Textures"], [208, 236, "News"], [249, 292, "Training"], [306, 359, "Fab Cloud"], [372, 430, "Parts Picker"], [445, 474, "Alerts"], [488, 530, "Symbols"], [545, 575, "Select"]];

/* ---------- layers tree ---------- */
type Layer = { s: string; w: number; lvl: number; col: string; count: string; box?: "+" | "-"; end?: boolean; sel?: boolean };
const layers: Layer[] = [
  { s: "0", w: 6, lvl: 0, col: k, count: "1" },
  { s: "SPRINKLER S...", w: 76, lvl: 0, col: k, count: "0", box: "-" },
  { s: "SPRINKLERS", w: 64, lvl: 1, col: k, count: "4" },
  { s: "PIPES", w: 29, lvl: 1, col: k, count: "1", box: "+" },
  { s: "NOTES", w: 35, lvl: 1, col: r, count: "11" },
  { s: "HANGERS", w: 53, lvl: 1, col: k, count: "5", sel: true },
  { s: "ELEVATIONS", w: 64, lvl: 1, col: k, count: "5" },
  { s: "BRACES", w: 42, lvl: 1, col: r, count: "2", end: true },
  { s: "BACKGROUND", w: 78, lvl: 0, col: k, count: "0", box: "-" },
  { s: "BEAMS", w: 38, lvl: 1, col: m, count: "11" },
  { s: "COLUMNS", w: 57, lvl: 1, col: r, count: "0" },
  { s: "ROOF PLA...", w: 64, lvl: 1, col: "#c0c0c0", count: "2", end: true },
  { s: "BENCHMARK", w: 72, lvl: 0, col: k, count: "1" },
  { s: "Reference", w: 52, lvl: 0, col: k, count: "0" },
  { s: "Ceiling Featu...", w: 78, lvl: 0, col: k, count: "0", end: true },
];
function LayerRow({ l, first }: { l: Layer; first: boolean }) {
  const bx = l.lvl ? 22 : 7;
  const last = l.end && l.lvl === 0;
  return (
    <div className="flex h-[17px] w-[255px] items-center">
      <svg className="h-[17px] w-[30px] shrink-0" viewBox="0 0 30 17" shapeRendering="crispEdges">
        <path d={`M7.500 ${first ? 8 : 0}V${last ? 8 : 17}`} stroke="#999" strokeDasharray="1 1" />
        {l.lvl === 1 && <path d={`M22.500 0V${l.end ? 8 : 17}`} stroke="#999" strokeDasharray="1 1" />}
        <path d={`M${bx} 8.500H${bx + 7}`} stroke="#999" strokeDasharray="1 1" />
        {l.box && <><path d={R(bx - 3.5, 4.5, 8, 8)} fill="#fff" stroke="#888" /><path d={`M${bx - 2} 8.500H${bx + 3}` + (l.box === "+" ? `M${bx + 0.5} 6V11` : "")} stroke="#000" /></>}
      </svg>
      <div className={"-ml-[15px] flex h-[17px] items-center " + (l.lvl ? "pl-[15px]" : "")}>
        <div className={"flex h-[17px] items-center pl-[2px] " + (l.sel ? "bg-[#0078d7] text-white " : "") + (l.lvl ? "w-[225px]" : "w-[240px]")}>
          <div className={"shrink-0 " + (l.lvl ? "w-[68px]" : "w-[83px]")}><Fit w={l.w}>{l.s}</Fit></div>
          <svg className="h-[15px] w-[36px] shrink-0" viewBox="0 0 36 15">
            <path d="M0.500 7Q8 -1.500 15.500 7Q8 14.500 0.500 7Z" fill={l.sel ? "#9ec8e8" : "#fff"} stroke={l.sel ? "#0a3a60" : "#000"} strokeWidth="1.200" />
            <circle cx="8" cy="6.500" r="3.300" fill={l.sel ? "#2a7a90" : "#34b894"} /><circle cx="8" cy="6.500" r="1.300" />
            <path d="M25 14V10Q20 2 28 1.500Q36 2 31.500 10V14" fill="none" stroke={l.sel ? "#16365c" : "#111"} strokeWidth="4" />
            <path d="M24.500 14V10Q19.500 2 27.500 1.500Q35 2 31 10V14" fill="none" stroke={l.sel ? "#7da8d4" : "#c8c8c8"} strokeWidth="2.200" />
            <path d="M23.500 11.500H26.500M30 11.500H33" stroke="#e00" strokeWidth="2" />
          </svg>
          <div className="ml-[24px] h-[14px] w-[18px] shrink-0 border border-b-[#555] border-l-[#ddd] border-r-[#555] border-t-[#ddd]" style={{ backgroundColor: l.col }} />
          <div className="ml-[6px]"><Fit w={l.count.length * 5.8}>{l.count}</Fit></div>
        </div>
      </div>
    </div>
  );
}

/* ---------- CAD drawing; coordinates are window pixels ---------- */
function Hanger({ x, v }: { x: number; v: number }) {
  return (
    <g stroke="#000" fill="none">
      <path d={`M${x - 15} ${v - 2}L${x + 16} ${v + 2}`} strokeWidth="1.500" />
      <path d={`M${x} ${v}V${v + 19}`} strokeWidth="1.600" />
      <ellipse cx={x} cy={v + 25} rx="3.800" ry="6" strokeWidth="2" transform={`rotate(-12 ${x} ${v + 25})`} />
      <path d={`M${x - 1} ${v + 29}L${x + 2} ${v + 21}`} strokeWidth="1" />
    </g>
  );
}
function Stripe({ x, v, top, bot }: { x: number; v: number; top: string; bot: string }) {
  const x2 = 1850, v2 = v + (x2 - x) * -0.3685;
  return (
    <>
      <path d={`M${x} ${v}L${x2} ${v2}v4L${x} ${v + 4}Z`} fill={top} />
      <path d={`M${x} ${v + 3.5}L${x2} ${v2 + 3.5}v4L${x} ${v + 7.5}Z`} fill={bot} />
    </>
  );
}
function Drawing() {
  return (
    <svg className="block h-[715px] w-[768px] bg-white" viewBox="1080 210 768 715" fontFamily="Liberation Sans, sans-serif">
      <path d="M1363 500L1848 320V525Z" fill="#f7f7f7" />
      <path d="M1363 500L1848 525V751L1721 798Z" fill="#ebebeb" />
      {/* red beam */}
      <path d="M1523.500 580L1848 460V508L1523.500 629Z" fill="#c27779" />
      <path d="M1681 522L1848 460V524.500L1668 515Z" fill="#ca8283" clipPath="url(#beam)" />
      <clipPath id="beam"><path d="M1523.500 580L1848 460V508L1523.500 629Z" /></clipPath>
      <path d="M1523.500 577L1848 456V463L1523.500 583Z" fill="#f48484" />
      <path d="M1526 579.500L1848 459.500" stroke="#ffc4c4" strokeDasharray="12 1" strokeWidth=".8" />
      <path d="M1524 580V628" stroke="#ee8080" />
      <path d="M1523.500 624L1848 504.500V508L1523.500 628Z" fill="#a31f21" />
      <path d="M1523.500 627L1848 507.500V511L1523.500 631Z" fill="#b84043" />
      <path d="M1541 671L1848 558" stroke="#600" strokeWidth="5.500" />
      <path d="M1541 670L1848 557" stroke="#ec0000" strokeWidth="4" />
      {/* yellow beams */}
      <path d="M1339 880L1848 691V925H1339Z" fill="#cdcd80" />
      <path d="M1670 757L1848 691V751.700L1721 798Z" fill="#bfbf77" />
      <path d="M1338 879L1848 689.500V697L1338 884Z" fill="#f3f373" />
      <path d="M1670 756L1848 689.500V697L1677 761Z" fill="#dede66" />
      <path d="M1341 881.500L1848 693" stroke="#ffffc0" strokeDasharray="12 1" strokeWidth=".8" />
      <path d="M1339.500 882V925" stroke="#e4e464" strokeWidth="1.500" />
      <Stripe x={1345} v={924} top="#a9a91a" bot="#eaea32" />
      <path d="M1352 926L1848 744" stroke="#ffffc8" strokeWidth=".8" />
      <Stripe x={1480} v={924} top="#c6c628" bot="#f1f133" />
      <Stripe x={1645} v={912} top="#abab18" bot="#eded38" />
      <path d="M1648 915.500L1848 842.500" stroke="#78781a" strokeWidth=".7" />
      <Stripe x={1744} v={923} top="#c6c628" bot="#f1f133" />
      {/* dimensions */}
      <path d="M1481 839L1848 703M1633 904L1848 825" stroke="#2222d8" fill="none" strokeWidth="1.200" />
      <path d="M1481 839L1503 826L1506 834Z" fill="#00f" />
      <path d="M1543 574L1566 596L1572 594" stroke="#fff" strokeWidth="2" fill="none" />
      <g strokeWidth="1.200" stroke="#000">
        <path d="M1543 572.700L1633 539L1657 559L1566 593Z" fill="#ebebeb" />
        <path d="M1543 816.700L1633 782.700L1657 803.500L1566 837Z" fill="#fff" />
        <path d="M1575 926L1633 904L1659 926Z" fill="#fff" />
      </g>
      <g fontWeight="bold" fontSize="26" textAnchor="middle" stroke="#000" strokeWidth=".3">
        <text transform="matrix(.95 -.355 .4 .8 1602.500 575)">30'-0"</text>
        <text transform="matrix(.95 -.355 .4 .8 1602.500 819)">20'-0"</text>
        <text transform="matrix(.95 -.355 .4 .8 1603 941)">20'-0"</text>
      </g>
      {/* benchmark and notes */}
      <g fontWeight="bold">
        <text fontSize="23" textAnchor="middle" transform="matrix(.32 -.84 1.08 .3 1670 295)" fill="#f00" stroke="#f00" strokeWidth=".5">SB-?</text>
        <text fontSize="21" textAnchor="middle" transform="matrix(-.96 -.76 .96 -.38 1458 678)" stroke="#000" strokeWidth=".3">0'-0 TS</text>
      </g>
      <path d="M1630 331L1631 323L1662 348L1665 340" fill="none" stroke="#e80000" strokeWidth="3.500" />
      <path d="M1405 645L1431 636M1405 641L1407 646L1413 646M1427 632L1431 636L1428 640M1412 641Q1420 652 1427 641Q1428 637 1422 634" fill="none" stroke="#000" strokeWidth="1.300" />
      <path d="M1507 710L1510 715L1521 716L1513 720L1514 724L1507 720L1499 723L1503 718L1494 714L1503 715Z" />
      {/* axes */}
      <g fill="none" strokeWidth="1.100">
        <path d="M1455 452L1422 425.700L1413.800 428L1408.300 403L1447 415.700L1439.600 419L1465 441" stroke="#338833" />
        <path d="M1466.500 441.700L1508 427L1503.800 421L1547 418.700L1525 440L1519.700 436L1472.500 453" stroke="#8c3038" />
        <path d="M1455.500 453V402.700L1448 406L1463.700 366.700L1480.700 393.300L1472.500 397V453Q1464 464 1455.500 453Z" stroke="#34348c" />
      </g>
      <Hanger x={1480} v={341.500} /><Hanger x={1452} v={351.500} /><Hanger x={1429} v={363.500} /><Hanger x={1452} v={375.500} /><Hanger x={1464} v={425.500} />
      <path d="M1457 446L1463 443L1472 446V452L1466 455L1458 452Z" fill="#000" />
      <path d="M1461 455L1467 445" stroke="#fff" strokeWidth="1" />
    </svg>
  );
}

/* ---------- right-hand bar ---------- */
const vText = (x: number, end: number, s: string): Item => ({ x, w: end - x, node: <VFit h={end - x}>{s}</VFit> });
const vIcon = (x: number, name: string): Item => ({ x, w: 30, node: <Icon name={name} /> });
const vSep = (x: number): Item => ({ x, w: 2, node: <div className="h-[2px] w-7 border-t border-[#7c828c] bg-white" /> });
function SideBar({ x, end, items }: { x: number; end: number; items: Item[] }) {
  return (
    <>
      <div className="flex shrink-0 flex-col items-center bg-[linear-gradient(90deg,#d0d3d8,#c0c4ca_40%,#949aa5)]" style={{ height: end - x }}>
        <div className="mt-1 h-[2px] w-[31px] shrink-0 bg-[repeating-linear-gradient(90deg,#333_0_2px,#e8e8e8_2px_4px)]" />
        <Flow vertical from={x + 6} items={items} />
      </div>
      <div className="flex h-5 shrink-0 items-center justify-end bg-[linear-gradient(90deg,#545b67,#aab0b9)] pr-1">
        <svg className="h-3 w-3" viewBox="0 0 12 12" shapeRendering="crispEdges"><path d="M1 1V11" stroke="#fff" /><path d="M5 1V11L10 6Z" fill="#555" /><path d="M6 11L11 6" stroke="#fff" strokeWidth="2" /></svg>
      </div>
    </>
  );
}

const vline = (x: number): Item => ({ x, w: 1, node: <div className="h-[18px] w-px bg-[#6c6c6c]" /> });
const st = (x: number, e: number, s: string) => tx(x, e, s, "text-white");

export default function App() {
  return (
    <div className="relative flex h-[1032px] w-[1920px] flex-col overflow-hidden bg-[#515151] font-['Open_Sans','Noto_Sans',sans-serif] text-[12px] leading-4 text-black">
      {/* title */}
      <div className="flex h-[23px] shrink-0 items-center bg-[linear-gradient(90deg,#e3f7f4_0%,#e4f8f3_40%,#f6f1ec_66%,#e8f7f0_80%,#e3f8ee_100%)]">
        <svg className="ml-[3px] h-[15px] w-[15px]" viewBox="0 0 15 15"><rect width="15" height="15" rx="2" fill="#3c4450" /><path d="M3 12L8 2L12 12M4 9H11" fill="none" stroke="#5f9be8" strokeWidth="2.500" /><path d="M3 12L8 2" stroke="#fff" strokeWidth="1" /></svg>
        <div className="ml-[6px]"><Fit w={893}>{"AutoSPRINK® 2023 Platinum - C:\\Users\\B.Chambers\\Desktop\\AutomationTesting\\SmokeTesting\\SPRINK Smoke Testing Files\\Match Elevation.cad - [Match Elevation.cad]"}</Fit></div>
        <svg className="ml-auto mr-[19px] -mt-[2px] h-[14px] w-[104px]" viewBox="0 0 104 14" fill="none" stroke="#111"><path d="M3 7.500H13M50 3.500H56V11.500H48.500V3.500H50M50 3V1.500H57.500V10H56M94 2L103 12M103 2L94 12" /></svg>
      </div>
      {/* menu */}
      <div className="flex h-[23px] shrink-0 items-center">
        <svg className="ml-[3px] h-[15px] w-4" viewBox="0 0 16 15" shapeRendering="crispEdges"><path d="M0 0H13L16 3V15H0Z" fill="#fff" /><path d="M1 1H12V4H1Z" fill="#ee0" /><path d="M1 7L7 13H1Z" fill="#0a0" /><path d="M15 4V14H1" stroke="#000" fill="none" /><path d="M6 7H13L9 12Z" fill="#aaa" stroke="#222" /><path d="M10 5L14 9" stroke="#f0f" strokeWidth="2" /></svg>
        <div className="-mt-px"><Flow from={19} items={menu.map(([a, e, s]) => tx(a, e, s, "text-white"))} /></div>
        <svg className="ml-auto mr-[3px] mt-[4px] h-3 w-[44px]" viewBox="0 0 44 12" fill="none" stroke="#9aa3b4"><path d="M2 9.500H8" strokeWidth="2" /><path d="M17.500 4.500H23.500V9.500H17.500ZM19.500 4V2.500H25.500V7.500H24" /><path d="M34 2L40 10M40 2L34 10" strokeWidth="2" /></svg>
      </div>
      {/* toolbars */}
      <div className="flex h-[46px] shrink-0"><Bar x={0} end={575} items={row1a} /><div className="w-px" /><Bar x={595} end={1784} items={row1b} /></div>
      <div className="flex h-[46px] shrink-0"><Bar x={0} end={1852} items={row2} /></div>
      <div className="flex h-[46px] shrink-0"><Bar x={0} end={552} items={row3a} /><Bar x={571} end={1288} items={row3b} /><Bar x={1307} end={1674} items={row3c} /><Bar x={1693} end={1890} items={row3d} /></div>

      <div className="flex h-[802px] shrink-0">
        <div className="flex w-[1872px] flex-col">
          <div className="flex h-[783px]">
            {/* layers panel */}
            <div className="flex w-[1069px] shrink-0 flex-col">
              <div className="flex h-[759px] flex-col border-l border-r-2 border-t border-[#e6e6e6] bg-white">
                <div className="flex h-[19px] shrink-0 items-center bg-[#9c9e9c] pl-[3px] text-[#4a4a4a]">
                  <div className="-mt-[2px]"><Fit w={31}>Layers</Fit></div>
                  <svg className="-mt-[2px] ml-auto mr-[2px] h-3 w-7" viewBox="0 0 28 12" fill="none" stroke="#333"><path d="M2 7.500H9M3.500 7V2.500H7.500V7M5.500 8V11M7 3V7" /><path d="M18 3L25 10M25 3L18 10" strokeWidth="1.300" /></svg>
                </div>
                <div className="h-[3px] shrink-0 border-b border-[#bbb] bg-[#f0f0f0]" />
                <div className="flex h-[44px] shrink-0 items-center border-l-2 border-[#f0f0f0] bg-[linear-gradient(#cdd0d6,#c3c6cc_35%,#9399a4)]"><Flow from={3} items={layerBar} /></div>
                <div className="ml-[2px] flex h-[19px] shrink-0 border-b border-[#c0c0c0] bg-[linear-gradient(#f8f8f8,#e8e8e8)]">
                  {([["Name", 29, "w-[100px] pl-[5px]"], ["V.", 9, "w-[20px] pl-[5px]"], ["S.", 8, "w-[20px] pl-[5px]"], ["A.", 9, "w-[20px] pl-[5px]"], ["C.", 9, "w-[20px] pl-[5px]"], ["Elements", 46, "w-[75px] pl-[5px]"]] as [string, number, string][]).map(([s, fw, cl]) => (
                    <div key={s} className={"flex items-center border-r border-[#b4b4b4] pt-px " + cl}><Fit w={fw}>{s}</Fit></div>
                  ))}
                </div>
                <div className="ml-[2px]">{layers.map((l, i) => <LayerRow key={l.s + i} l={l} first={i === 0} />)}</div>
              </div>
              <div className="flex h-6 items-start border-t border-[#6e6e6e]">
                <div className="ml-1 flex h-[20px] w-[41px] items-center rounded-b border-x border-b border-[#c8eef0] bg-[linear-gradient(#d8dadc,#fff)] pl-[3px] pt-[2px]"><Fit w={31}>Layers</Fit></div>
                <Flow className="h-[23px]" from={45} items={tabs.map(([a, e, s]) => tx(a, e, s, "text-white"))} />
              </div>
            </div>
            <div className="w-[5px] shrink-0" />
            {/* document */}
            <div className="flex w-[798px] flex-col">
              <div className="flex h-[20px] items-center pl-[7px] text-white">
                <div className="mt-[3px]"><Fit w={52}>Start Page</Fit></div>
                <div className="ml-[10px] mt-[4px] flex h-4 w-[130px] items-center rounded-t bg-white pl-[4px] text-black">
                  <Fit w={105} className="font-bold">Match Elevation.cad</Fit>
                  <svg className="ml-[9px] mt-px h-2 w-2" viewBox="0 0 8 8"><path d="M0 0L8 8M8 0L0 8" stroke="#666" strokeWidth="1.300" /></svg>
                </div>
                <svg className="ml-auto mr-[4px] h-2 w-6" viewBox="0 0 24 8" fill="none" stroke="#3c3c3c"><path d="M5 0V8L0 4ZM18 0V8L23 4Z" /></svg>
              </div>
              <div className="flex h-[763px] flex-col border-[3px] border-b-[4px] border-[#ececec] bg-[#f4f4f4] px-[2px]">
                <div className="h-[3px] shrink-0 border-y border-[#777] bg-[#aaa]" />
                <div className="flex h-[715px] shrink-0 border-l border-[#666]">
                  <Drawing />
                  <div className="flex w-[19px] items-center justify-center bg-[#efefef]"><div className="-mt-px h-4 w-px bg-[#777]" /></div>
                </div>
                <div className="flex h-[18px] shrink-0 items-center border-l border-[#666] bg-[#efefef]"><div className="ml-[321px] h-[2px] w-[17px] bg-[#8c8c8c]" /></div>
                <div className="flex h-4 shrink-0 bg-[linear-gradient(#484848,#707070_25%,#7e7e7e)]">
                  {["M5 3V7M9 2L6 5L9 8", "M8 2L5 5L8 8", "M5 2L8 5L5 8", "M4 2L7 5L4 8M9 3V7"].map((p) => (
                    <svg key={p} className="ml-[2px] mt-[3px] h-3 w-[14px] bg-[#e8e8e8]" viewBox="0 0 14 12" fill="none" stroke="#222"><path d={p} /></svg>
                  ))}
                  <div className="ml-[3px] flex h-4 w-[48px] items-center bg-white pl-[8px] pt-[2px]"><Fit w={40} className="font-bold">*Model</Fit></div>
                  <svg className="-mr-[8px] h-4 w-[10px]" viewBox="0 0 10 16"><path d="M0 0H10L0 16Z" fill="#fff" /></svg>
                  <div className="flex h-4 w-[62px] items-center bg-[linear-gradient(#c2c8ce,#e2e6ea)] pl-[10px] pt-[2px] [clip-path:polygon(10px_0,100%_0,46px_100%,0_100%)]"><Fit w={38}>Sheet 1</Fit></div>
                </div>
                <div className="h-px shrink-0 bg-white" />
              </div>
            </div>
          </div>
          {/* status line */}
          <div className="flex h-[19px] shrink-0 items-center bg-[linear-gradient(#3f424d_0%,#3c3f49_42%,#2a2a29_46%,#343432_100%)]">
            <Flow className="pt-[2px]" from={0} items={[st(4, 249, "Lock the camera position on the target element."), vline(1559), st(1562, 1613, "0 selected"), vline(1615), vline(1621), st(1625, 1676, "Elev1: 1'-0"), vline(1679), st(1682, 1743, "Length: 1'-0"), vline(1745), st(1749, 1806, "ø 2 (2.1570)"), vline(1809), st(1813, 1839, "# Off"), vline(1843), st(1846, 1870, "Foot")]} />
          </div>
        </div>
        {/* right bar */}
        <div className="flex w-[47px] flex-col">
          <SideBar x={184} end={397} items={[vText(200, 265, "Import DWG"), vIcon(274, "dwg"), vIcon(317, "overlay"), vIcon(359, "chain")]} />
          <SideBar x={417} end={738} items={[vIcon(433, "swing"), vIcon(474, "sprWand"), vSep(514), vIcon(523, "peak"), vIcon(567, "vise"), vSep(607), vIcon(617, "nodeWand"), vIcon(658, "tip"), vIcon(703, "joints")]} />
          <SideBar x={758} end={959} items={[vText(775, 806, "GLSL"), { x: 809, w: 63, node: <div className="flex h-[63px] w-[42px] flex-col items-center border border-[#fff3d0] bg-[linear-gradient(#fcd9ae_0%,#fdc487_22%,#fdaa4c_32%,#fdc765_68%,#fee88a_100%)]"><Flow vertical from={809} items={[vText(814, 869, "OpenGL®")]} /></div> }, vIcon(879, "backView"), vIcon(921, "fwdView")]} />
        </div>
      </div>
      {/* bottom toolbars */}
      <div className="flex h-[46px] shrink-0">
        <Bar x={0} end={538} items={[ic(16, "winFolder"), hot(55, 93, "Layers", 58, 89), hot(95, 160, "Parts Picker", 98, 156), hot(162, 198, "Alerts", 165, 194), hot(200, 237, "Select", 203, 233), hot(239, 288, "Symbols", 243, 284), ic(296, "aLeft"), dim(333, 342, "-Y"), ic(354, "aUp"), dim(393, 406, "+X"), ic(418, "aRight"), dim(457, 469, "+Y"), ic(482, "aDown"), dim(519, 529, "-X")]} />
        <div className="w-px" />
        <Bar x={558} end={680} items={[ic(570, "blackArrow"), { x: 613, w: 61, node: <div className="flex h-4 items-center bg-white"><div className="h-[14px] bg-[#0078d7] pl-px leading-[14px] text-white"><Fit w={18}>,,11</Fit></div></div> }]} />
        <div className="w-px" />
        <Bar x={700} end={1864} items={[...icons(714, "undoLine dotsSel checks burst target"), hot(929, 1015, "Lock On Target", 933, 1010), ...icons(1022, "zoomIn zoomOut pUp pLeft pUndo pDown pRight pRedo rotL rotR houseA houseB houseC houseD expand plane plan"), dim(1768, 1856, "Refresh Elements")]} />
      </div>
      {/* tooltip */}
      <div className="absolute left-[972px] top-[950px] h-[56px] w-[211px] border border-[#767676] bg-[linear-gradient(#fff,#e4e5f0)] pl-[5px] pt-[2px] text-[#4c4c4c]">
        <Fit w={119} className="[-webkit-text-stroke:0.4px]">Lock Camera On Target</Fit>
        <div className="mt-[4px] leading-[13px]"><Fit w={199}>Lock the camera position on the target</Fit><Fit w={43}>element.</Fit></div>
      </div>
    </div>
  );
}
